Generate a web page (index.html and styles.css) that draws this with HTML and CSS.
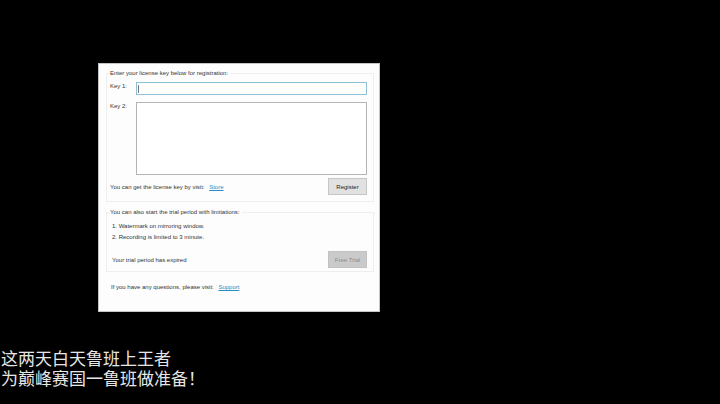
FILE: index.html
```html
<!DOCTYPE html>
<html lang="en">
<head>
    <meta charset="UTF-8">
    <meta name="viewport" content="width=device-width, initial-scale=1.0">
    <title>Registration</title>
    <link rel="stylesheet" href="styles.css">
</head>
<body>
    <main class="dialog">
        <fieldset class="group">
            <legend>Enter your license key below for registration:</legend>
            <div class="keys">
                <label for="key1">Key 1:</label>
                <input type="text" id="key1" class="key-input">
                <label for="key2">Key 2:</label>
                <textarea id="key2" class="key-text"></textarea>
            </div>
            <div class="row">
                <span>You can get the license key by visit: <a href="#">Store</a></span>
                <button type="button" class="btn">Register</button>
            </div>
        </fieldset>

        <fieldset class="group group-trial">
            <legend>You can also start the trial period with limitations:</legend>
            <ol class="limits">
                <li>Watermark on mirroring window.</li>
                <li>Recording is limited to 3 minute.</li>
            </ol>
            <div class="row trial">
                <span>Your trial period has expired</span>
                <button type="button" class="btn" disabled>Free Trial</button>
            </div>
        </fieldset>

        <p class="help">If you have any questions, please visit: <a href="#">Support</a></p>
    </main>

    <p class="caption" lang="zh-CN">这两天白天鲁班上王者<br>为巅峰赛国一鲁班做准备！</p>
</body>
</html>
```

FILE: styles.css
```css
* {
    box-sizing: border-box;
}

body {
    margin: 0;
    min-height: 100vh;
    display: flex;
    flex-direction: column;
    justify-content: space-between;
    align-items: flex-start;
    background-color: #000;
    font-family: "Liberation Sans", Arial, sans-serif;
    font-size: 6px;
    line-height: 8px;
    color: #333;
}

a {
    margin-left: 3px;
    color: #2a8cc4;
}

.dialog {
    width: 39%;
    min-width: 282px;
    margin: 63px 0 0 98px;
    padding: 5px 5px 20px 7px;
    background: #fdfdfd;
    border: 1px solid #c4c4c4;
}

.group {
    min-width: 0;
    margin: 0 0 6px;
    padding: 5px 6px 6px 3px;
    border: 1px solid #eee;
}

.group-trial {
    padding-bottom: 3px;
}

.group legend {
    padding: 0 2px 0 0;
}

.keys {
    display: grid;
    grid-template-columns: 26px 1fr;
    row-gap: 7px;
    margin-bottom: 3px;
}

.key-input,
.key-text {
    display: block;
    width: 100%;
    margin: 0;
    padding: 1px;
    border: 1px solid #b4b4b4;
    border-radius: 0;
    outline: none;
    background: #fff;
    font: inherit;
}

/* text cursor at the start of the field */
.key-input {
    height: 13px;
    border-color: #8fbfd4;
    background: linear-gradient(#777, #777) 1px center / 1px 8px no-repeat #fff;
}

.key-text {
    height: 73px;
    resize: none;
}

.row {
    display: flex;
    justify-content: space-between;
    align-items: center;
}

.btn {
    width: 39px;
    height: 17px;
    padding: 0;
    border: 1px solid #c6c6c6;
    border-radius: 0;
    background: #e1e1e1;
    font: inherit;
    color: #222;
}

.btn:disabled {
    border-color: #c2c2c2;
    background: #cacaca;
    color: #8c8c8c;
}

.limits {
    margin: 0 0 8px;
    padding-left: 2px;
    list-style-position: inside;
    line-height: 11px;
}

.trial {
    padding-left: 2px;
}

.help {
    margin: 11px 0 0 5px;
}

.caption {
    margin: 0 0 14px 1px;
    font-family: "Liberation Sans", "Noto Sans CJK SC", sans-serif;
    font-size: 17px;
    line-height: 20px;
    color: #e6e6e6;
}
```
